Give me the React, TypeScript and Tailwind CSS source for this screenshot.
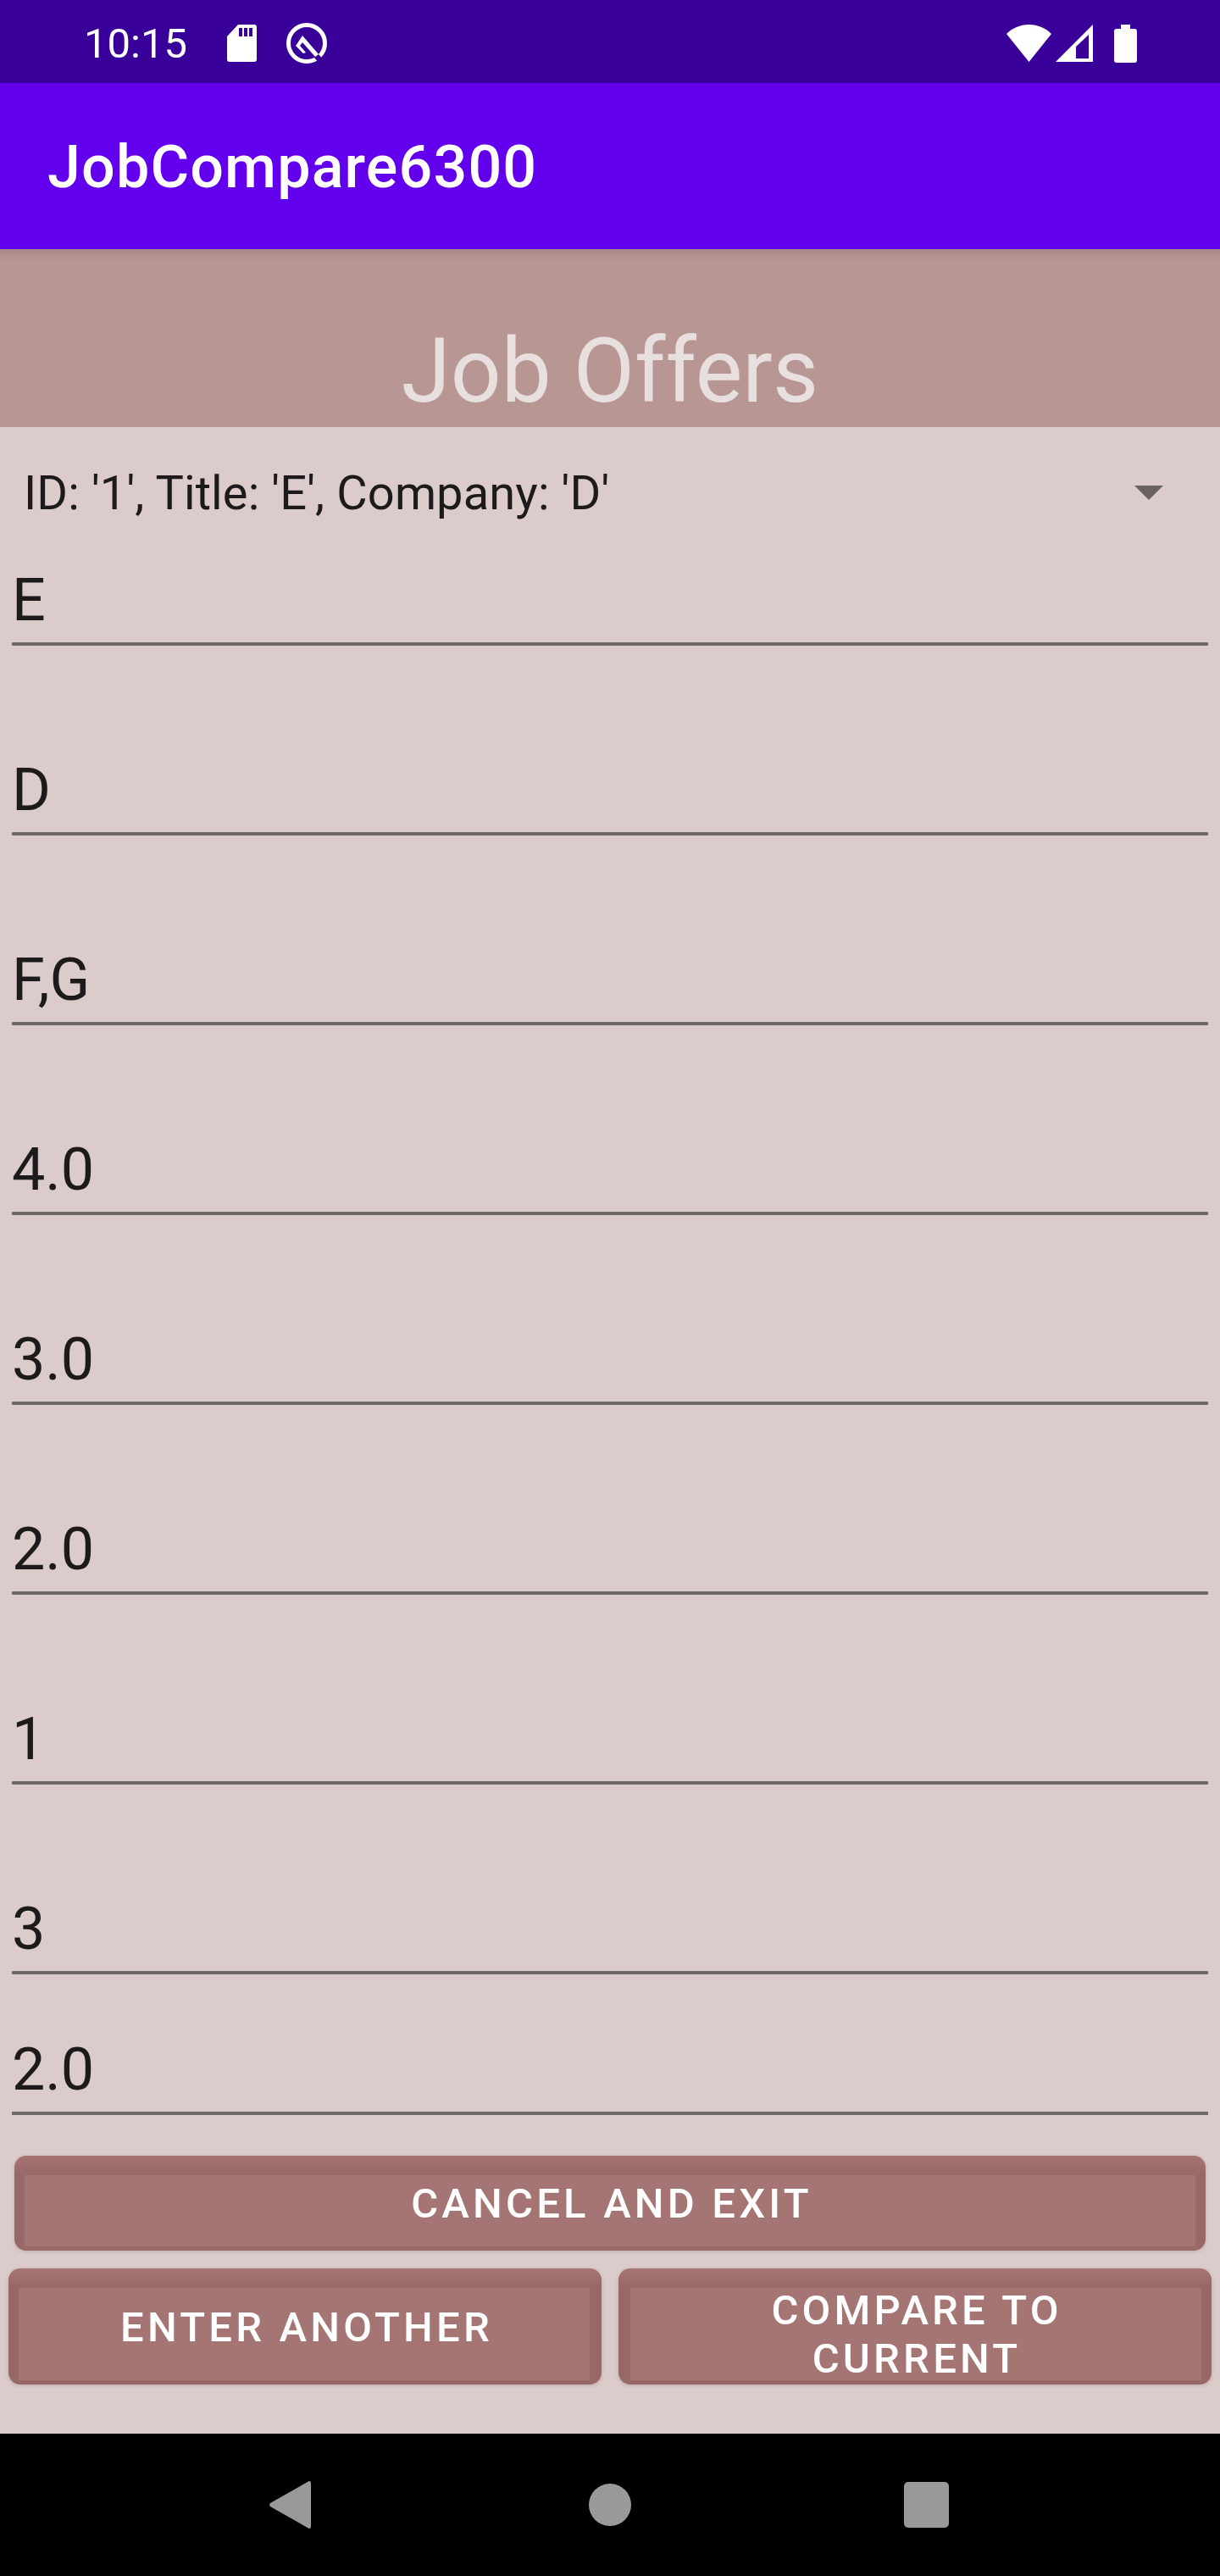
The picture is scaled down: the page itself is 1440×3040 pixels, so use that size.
const FIELDS = ['E', 'D', 'F,G', '4.0', '3.0', '2.0', '1', '3']

function SdCardIcon() {
  return (
    <svg width="35" height="44" viewBox="0 0 35 44" className="fill-white">
      <path fillRule="evenodd" d="M13 0h19a3 3 0 0 1 3 3v38a3 3 0 0 1-3 3H3a3 3 0 0 1-3-3V14zM14 4v10h4V4zM20 4v10h4V4zM26 4v10h4V4z" />
    </svg>
  )
}

function DataSaverIcon() {
  return (
    <svg width="50" height="50" viewBox="0 0 50 50">
      <circle cx="25" cy="25" r="21.5" fill="none" stroke="#fff" strokeWidth="5" />
      <path d="M33 41l8 9 5-4-8-9z" fill="#390099" />
      <path d="M20 16L39 38 35 41 20 24 17 28 24 36 21 37 12 28Z" fill="#fff" />
    </svg>
  )
}

function Field({ value, className }: { value: string; className: string }) {
  return (
    <div className={`${className} mx-[14px] flex h-[104px] items-end border-b-[4px] border-[#716a6a] pb-[15px] text-[70px] leading-none text-[#1c1a1a]`}>
      {value}
    </div>
  )
}

function ActionButton({ className, inner, children }: { className: string; inner: string; children: React.ReactNode }) {
  return (
    <button className={`${className} flex rounded-[14px] bg-[linear-gradient(#a57473,#986867_23px)] pt-[23px] pb-[5px] shadow-[0_1px_4px_rgba(80,40,40,0.2)]`}>
      <span className={`${inner} flex flex-1 items-center justify-center bg-[#a57574] text-center text-[49px] font-medium uppercase tracking-[4.2px] text-white`}>
        {children}
      </span>
    </button>
  )
}

export default function App() {
  return (
    <div className="flex h-[3040px] w-[1440px] flex-col bg-[#dccbcb] font-['Roboto',sans-serif]">
      {/* status bar */}
      <div className="flex h-[98px] items-center justify-between bg-[#390099] pl-[99px] pr-[98px] pt-[4px]">
        <div className="flex items-center">
          <span className="w-[120px] text-[49px] leading-none text-white">10:15</span>
          <div className="ml-[49px] flex"><SdCardIcon /></div>
          <div className="ml-[34px] flex"><DataSaverIcon /></div>
        </div>
        <div className="flex items-center">
          <svg width="53" height="44" viewBox="0 0 53 44" className="fill-white"><path d="M0 11C7 4 16 0 26.5 0S46 4 53 11L26.5 44z" /></svg>
          <svg width="44" height="44" viewBox="0 0 44 44" className="ml-[5px] fill-white"><path fillRule="evenodd" d="M44 0v44H0zM39 12L24 26v14h15z" /></svg>
          <svg width="27" height="45" viewBox="0 0 27 45" className="ml-[25px] fill-white"><path d="M8 0h11v5h5a3 3 0 0 1 3 3v34a3 3 0 0 1-3 3H3a3 3 0 0 1-3-3V8a3 3 0 0 1 3-3h5z" /></svg>
        </div>
      </div>

      {/* app bar */}
      <div className="flex h-[196px] items-center bg-[#6200ee] pl-[56px] pt-[2px] text-[70px] font-medium tracking-[1.15px] text-white">JobCompare6300</div>

      {/* page header */}
      <div className="flex h-[210px] items-end justify-center bg-[linear-gradient(#a98a87,#b89694_14px)] text-[105px] leading-[130px] text-[#e8dfdf]">
        Job Offers
      </div>

      {/* form */}
      <div className="flex min-h-0 flex-1 flex-col">
        <div className="flex h-[154px] items-center justify-between pl-[28px] pr-[67px] text-[56px] tracking-[0.12px] text-[#1c1a1a]">
          <span className="pt-[2px]">ID: '1', Title: 'E', Company: 'D'</span>
          <span className="h-0 w-0 border-x-[17px] border-t-[17px] border-x-transparent border-t-[#6a6262]" />
        </div>
        <Field value={FIELDS[0]} className="" />
        {FIELDS.slice(1).map((f) => (
          <Field key={f} value={f} className="mt-[120px]" />
        ))}
        <Field value="2.0" className="mt-[62px]" />

        <ActionButton className="mx-[17px] mt-[48px] h-[112px] px-[12px]" inner="pl-[4px] pb-[16px]">Cancel and exit</ActionButton>
        <div className="mt-[21px] flex gap-[20px] px-[10px]">
          <ActionButton className="h-[137px] w-[700px] pl-[12px] pr-[14px]" inner="pl-[6px] pb-[16px]">Enter another</ActionButton>
          <ActionButton className="h-[137px] w-[700px] pl-[14px] pr-[12px]" inner="pl-[102px] pr-[100px] leading-[57px]">Compare to current</ActionButton>
        </div>
      </div>

      {/* nav bar */}
      <div className="flex h-[168px] items-center bg-black">
        <svg width="49" height="56" viewBox="0 0 49 56" className="ml-[318px] fill-[#999]"><path d="M47 0a2 2 0 0 1 2 2v52a2 2 0 0 1-2 2 2 2 0 0 1-1.500-.7L1 30a3 3 0 0 1 0-4L45.500.7A2 2 0 0 1 47 0z" /></svg>
        <div className="ml-[328px] h-[50px] w-[50px] rounded-full bg-[#999]" />
        <div className="ml-[322px] h-[54px] w-[53px] rounded-[5px] bg-[#999]" />
      </div>
    </div>
  )
}
